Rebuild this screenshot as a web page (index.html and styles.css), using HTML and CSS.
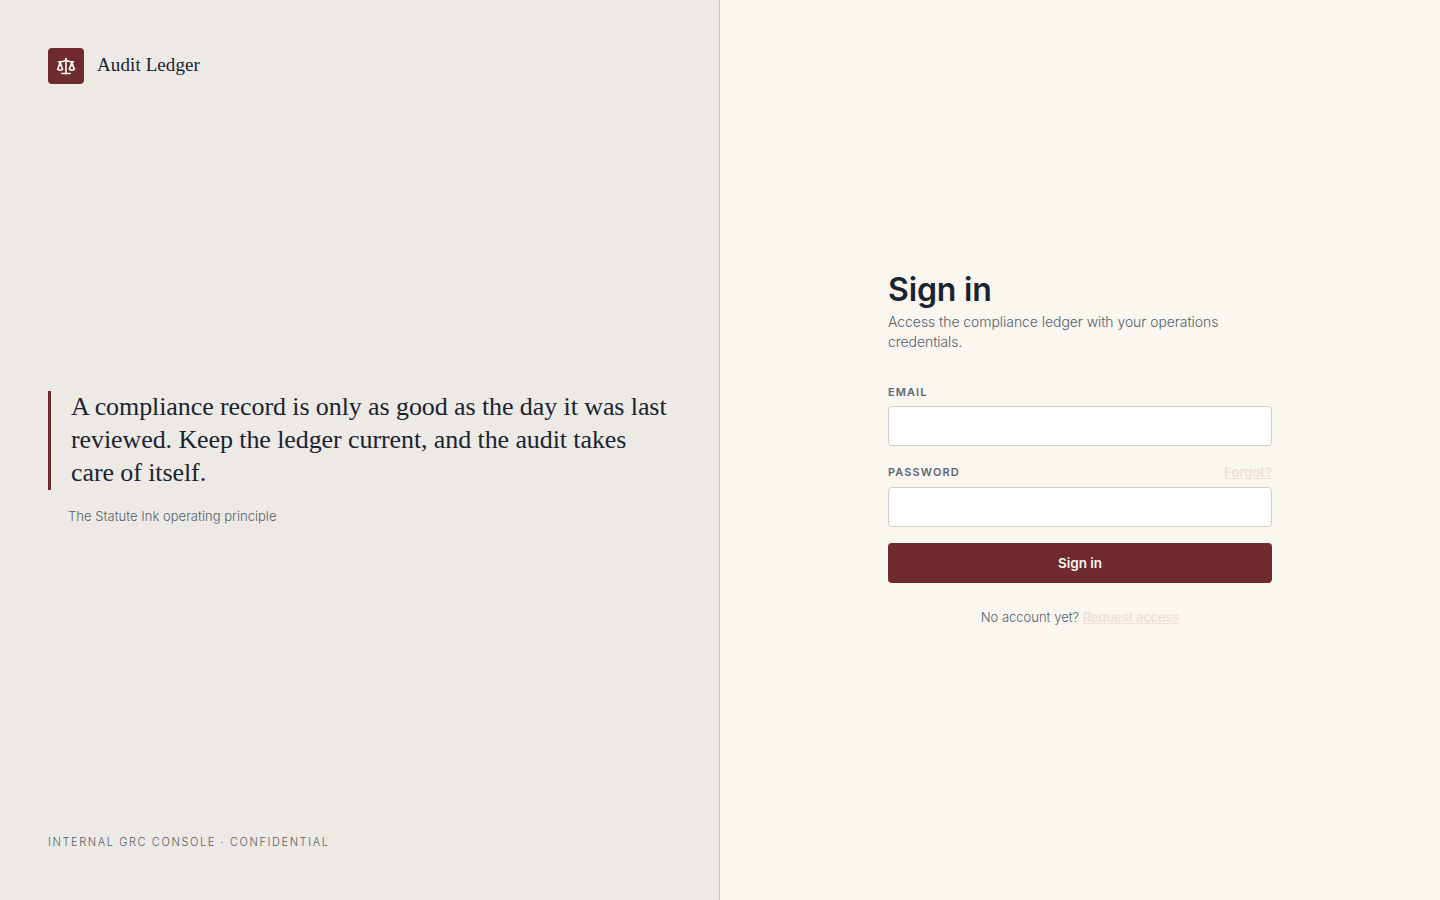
FILE: index.html
```html
<!DOCTYPE html>
<html lang="en">
<head>
<meta charset="utf-8">
<title>Audit Ledger — Sign in</title>
<link rel="stylesheet" href="styles.css">
</head>
<body>
<div class="page">
  <aside class="brand-panel">
    <div class="brand">
      <span class="brand-mark">
        <svg width="20" height="20" viewBox="0 0 24 24" fill="none" stroke="currentColor" stroke-width="2" stroke-linecap="round" stroke-linejoin="round"><path d="m16 16 3-8 3 8c-.87.65-1.92 1-3 1s-2.13-.35-3-1Z"/><path d="m2 16 3-8 3 8c-.87.65-1.92 1-3 1s-2.13-.35-3-1Z"/><path d="M7 21h10"/><path d="M12 3v18"/><path d="M3 7h2c2 0 5-1 7-2 2 1 5 2 7 2h2"/></svg>
      </span>
      <span class="brand-name">Audit Ledger</span>
    </div>
    <figure class="quote">
      <blockquote>A compliance record is only as good as the day it was last reviewed. Keep the ledger current, and the audit takes care of itself.</blockquote>
      <figcaption>The Statute Ink operating principle</figcaption>
    </figure>
    <p class="legal">INTERNAL GRC CONSOLE · CONFIDENTIAL</p>
  </aside>
  <main class="form-panel">
    <form class="form">
      <h1>Sign in</h1>
      <p class="lead">Access the compliance ledger with your operations credentials.</p>
      <div class="field field-email">
        <label class="label" for="email">EMAIL</label>
        <input id="email" class="input" type="email">
      </div>
      <div class="field">
        <div class="label-row">
          <label class="label" for="password">PASSWORD</label>
          <a class="faint-link small" href="#">Forgot?</a>
        </div>
        <input id="password" class="input" type="password">
      </div>
      <button class="submit" type="button">Sign in</button>
      <p class="alt">No account yet? <a class="faint-link tight" href="#">Request access</a></p>
    </form>
  </main>
</div>
</body>
</html>
```
FILE: styles.css
```css
* { box-sizing: border-box; }
html, body { margin: 0; height: 100%; }
body { font-family: "Inter", "Liberation Sans", sans-serif; color: #1a2330; background: #faf7f1; }
.page { display: grid; grid-template-columns: 1fr 1fr; height: 900px; }
.brand-panel { display: flex; flex-direction: column; justify-content: space-between; padding: 48px; background: #edeae5; border-right: 1px solid #cdc9c1; }
.brand { display: flex; align-items: center; gap: 13px; }
.brand-mark { display: flex; align-items: center; justify-content: center; width: 36px; height: 36px; border-radius: 4px; background: #6e2a2c; color: #faf7f1; }
.brand-name { margin-top: -2px; font-family: "Liberation Serif", serif; font-size: 19px; letter-spacing: 0.1px; color: #1a2330; }
.quote { margin: -2px 0 0; }
.quote blockquote { margin: 0; padding: 0 0 1px 23px; background: linear-gradient(#6e2a2c, #6e2a2c) 0 1px / 3px 99px no-repeat; font-family: "Liberation Serif", serif; font-size: 26px; line-height: 33px; letter-spacing: -0.09px; color: #1a2330; }
.quote figcaption { margin-top: 16px; padding-left: 20px; font-size: 13px; font-weight: 300; letter-spacing: 0.03px; line-height: 20px; color: #565d69; }
.legal { margin: 0 0 2px; font-size: 11px; font-weight: 300; line-height: 16px; letter-spacing: 1.6px; color: #565d69; }
.form-panel { display: flex; align-items: center; justify-content: center; }
.form { width: 384px; }
h1 { margin: 0; font-family: "Inter", sans-serif; font-size: 32px; line-height: 34px; font-weight: 600; letter-spacing: -0.15px; color: #1a2330; }
.lead { margin: 5px 0 0; font-size: 14px; font-weight: 300; letter-spacing: -0.06px; line-height: 20px; color: #565d69; }
.field { margin-top: 18px; }
.field-email { margin-top: 32px; }
.label-row { display: flex; justify-content: space-between; align-items: flex-start; height: 23px; }
.label { display: block; margin-bottom: 6px; font-size: 11px; line-height: 16px; font-weight: 600; letter-spacing: 1.1px; color: #5f6672; }
.input { display: block; width: 100%; height: 40px; padding: 0 12px; background: #fff; border: 1px solid #d2cdc3; border-radius: 4px; }
.submit { display: block; width: 100%; height: 40px; margin-top: 16px; border: 0; border-radius: 4px; background: #6e2a2c; color: #faf7f1; font-family: "Inter", sans-serif; font-size: 13.5px; font-weight: 600; }
.alt { margin: 24px 0 0; text-align: center; font-size: 13px; font-weight: 300; line-height: 20px; color: #565d69; }
.faint-link { color: #eedfd9; font-weight: 600; text-decoration: underline; }
.tight { letter-spacing: -0.2px; }
.small { font-size: 13px; line-height: 16px; }
```
